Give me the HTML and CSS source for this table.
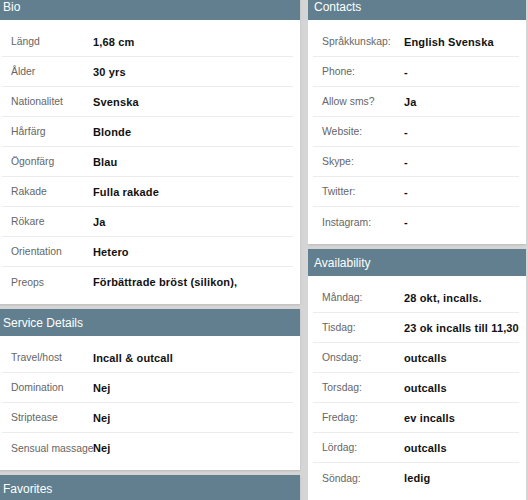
FILE: index.html
```html
<!DOCTYPE html>
<html lang="sv">
<head>
<meta charset="utf-8">
<title>Profile</title>
<link rel="stylesheet" href="styles.css">
</head>
<body>
<div class="page">
  <div class="col col-left">
    <section class="panel">
      <h2 class="panel-title">Bio</h2>
      <div class="panel-body">
        <div class="row"><span class="label">Längd</span><span class="value">1,68 cm</span></div>
        <div class="row"><span class="label">Ålder</span><span class="value">30 yrs</span></div>
        <div class="row"><span class="label">Nationalitet</span><span class="value">Svenska</span></div>
        <div class="row"><span class="label">Hårfärg</span><span class="value">Blonde</span></div>
        <div class="row"><span class="label">Ögonfärg</span><span class="value">Blau</span></div>
        <div class="row"><span class="label">Rakade</span><span class="value">Fulla rakade</span></div>
        <div class="row"><span class="label">Rökare</span><span class="value">Ja</span></div>
        <div class="row"><span class="label">Orientation</span><span class="value">Hetero</span></div>
        <div class="row"><span class="label">Preops</span><span class="value">Förbättrade bröst (silikon),</span></div>
      </div>
    </section>
    <section class="panel">
      <h2 class="panel-title">Service Details</h2>
      <div class="panel-body">
        <div class="row"><span class="label">Travel/host</span><span class="value">Incall &amp; outcall</span></div>
        <div class="row"><span class="label">Domination</span><span class="value">Nej</span></div>
        <div class="row"><span class="label">Striptease</span><span class="value">Nej</span></div>
        <div class="row"><span class="label">Sensual massage</span><span class="value">Nej</span></div>
      </div>
    </section>
    <section class="panel">
      <h2 class="panel-title">Favorites</h2>
      <div class="panel-body"></div>
    </section>
  </div>
  <div class="col col-right">
    <section class="panel">
      <h2 class="panel-title">Contacts</h2>
      <div class="panel-body">
        <div class="row"><span class="label">Språkkunskap:</span><span class="value">English Svenska</span></div>
        <div class="row"><span class="label">Phone:</span><span class="value">-</span></div>
        <div class="row"><span class="label">Allow sms?</span><span class="value">Ja</span></div>
        <div class="row"><span class="label">Website:</span><span class="value">-</span></div>
        <div class="row"><span class="label">Skype:</span><span class="value">-</span></div>
        <div class="row"><span class="label">Twitter:</span><span class="value">-</span></div>
        <div class="row"><span class="label">Instagram:</span><span class="value">-</span></div>
      </div>
    </section>
    <section class="panel">
      <h2 class="panel-title">Availability</h2>
      <div class="panel-body">
        <div class="row"><span class="label">Måndag:</span><span class="value">28 okt, incalls.</span></div>
        <div class="row"><span class="label">Tisdag:</span><span class="value">23 ok incalls till 11,30</span></div>
        <div class="row"><span class="label">Onsdag:</span><span class="value">outcalls</span></div>
        <div class="row"><span class="label">Torsdag:</span><span class="value">outcalls</span></div>
        <div class="row"><span class="label">Fredag:</span><span class="value">ev incalls</span></div>
        <div class="row"><span class="label">Lördag:</span><span class="value">outcalls</span></div>
        <div class="row"><span class="label">Söndag:</span><span class="value">ledig</span></div>
      </div>
    </section>
  </div>
</div>
</body>
</html>
```

FILE: styles.css
```css
html, body {
  margin: 0;
  padding: 0;
}
body {
  background: #d5d5d5;
  font-family: "Liberation Sans", Arial, sans-serif;
  overflow: hidden;
}
.page {
  display: flex;
  align-items: flex-start;
  gap: 8px;
  margin: -7px 0 0 -3px;
}
.col {
  display: flex;
  flex-direction: column;
  gap: 5px;
}
.col-left {
  width: 303px;
  flex: none;
}
.col-right {
  width: 218px;
  flex: none;
  overflow: hidden;
}
.panel {
  background: #fff;
  box-shadow: 0 1px 2px rgba(0, 0, 0, 0.12);
}
.panel-title {
  margin: 0;
  height: 27px;
  line-height: 28px;
  padding: 0 6px;
  background: #617f8e;
  color: #fff;
  font-size: 12px;
  font-weight: normal;
}
.panel-body {
  padding: 7px 7px 7px 5px;
}
.row {
  display: grid;
  grid-template-columns: 82px auto;
  align-items: center;
  height: 30px;
  box-sizing: border-box;
  padding-left: 9px;
  border-bottom: 1px solid #ececec;
  white-space: nowrap;
}
.row:last-child {
  border-bottom: none;
}
.label {
  font-size: 10.4px;
  color: #666;
}
.value {
  font-size: 11px;
  font-weight: bold;
  color: #111;
  letter-spacing: 0.15px;
}
```
